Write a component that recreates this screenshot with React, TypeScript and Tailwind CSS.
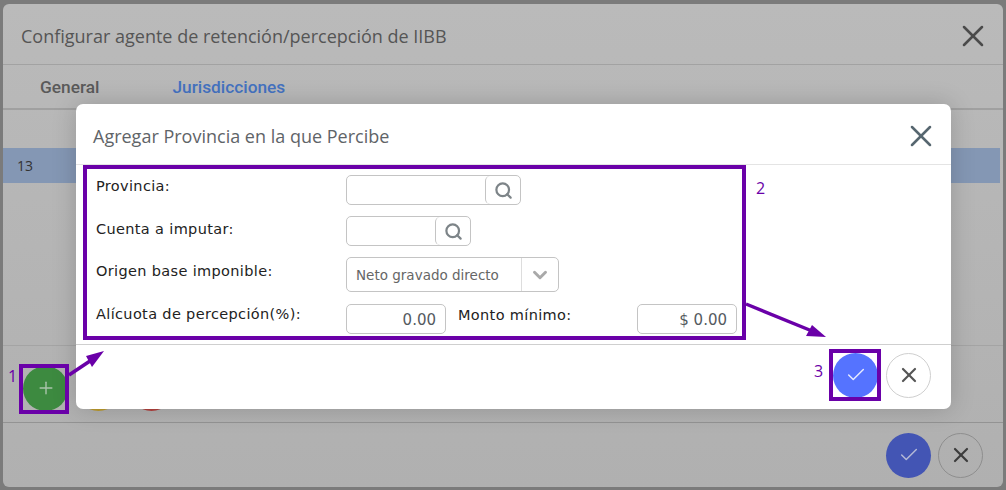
import React from 'react';
import { Check, ChevronDown, Plus, Search, X } from 'lucide-react';

const openSans = "font-['Open_Sans',sans-serif]";
const formFont = "font-['DejaVu_Sans',sans-serif]";

const RoundButton = ({ kind, dim }: { kind: 'ok' | 'cancel'; dim?: boolean }) =>
  kind === 'ok' ? (
    <button className={`flex h-[45px] w-[45px] items-center justify-center rounded-full ${dim ? 'bg-[#4355b4]' : 'bg-[#5573ff]'}`}>
      <Check size={22} strokeWidth={1.6} className={dim ? 'text-[#b4b9d6]' : 'text-[#e6eaff]'} />
    </button>
  ) : (
    <button className={`flex h-[45px] w-[45px] items-center justify-center rounded-full border ${dim ? 'border-[#8e8e8e]' : 'border-[#cfcfcf] bg-white'}`}>
      <X size={24} strokeWidth={2.2} className={dim ? 'text-[#3c3c3c]' : 'text-[#555555]'} />
    </button>
  );

const SearchField = ({ width }: { width: string }) => (
  <div className={`flex h-[30px] ${width} rounded-[5px] border border-[#c4c4c4]`}>
    <div className="flex-1" />
    <div className="flex w-[35px] items-center justify-center rounded-[5px] border-l border-[#c4c4c4]">
      <Search size={19} strokeWidth={2.8} className="text-[#7d8488]" />
    </div>
  </div>
);

const NumberField = ({ value }: { value: string }) => (
  <div className={`flex h-[30px] w-[100px] items-center justify-end rounded-[5px] border border-[#c4c4c4] pr-[9px] pt-[2px] text-[15px] text-[#555b5f] ${formFont}`}>
    {value}
  </div>
);

const Label = ({ children, className = '' }: { children: React.ReactNode; className?: string }) => (
  <span className={`text-[14.5px] tracking-[0.35px] text-[#222222] ${formFont} ${className}`}>{children}</span>
);

export default function App() {
  return (
    <div className="relative h-[490px] w-[1006px] overflow-hidden bg-[#7b7b7b] pb-[3px] pl-[3px] pr-[3px] pt-[4px]">
      {/* fondo: ventana principal */}
      <div className="flex h-[483px] flex-col rounded-[6px] bg-gradient-to-b from-[#bababa] to-[#b0b0b0]">
        <div className="flex h-[61px] items-center justify-between border-b border-[#a2a2a2] pl-[18px] pr-[12px] pt-[4px]">
          <h1 className={`text-[18px] font-medium text-[#555555] ${openSans}`}>Configurar agente de retención/percepción de IIBB</h1>
          <X size={36} strokeWidth={1.7} className="text-[#4a4a4a]" />
        </div>
        <div className="flex h-[45px] items-center gap-[73px] border-b-2 border-[#a0a0a0] pl-[37px] pt-[3px] font-['Roboto',sans-serif] text-[17.3px] font-medium">
          <span className="text-[#5a5a5a]">General</span>
          <span className="text-[#4472c0]">Jurisdicciones</span>
        </div>
        <div className="h-[38px] shrink-0" />
        <div className={`mr-[3px] flex h-[35px] shrink-0 items-center bg-[#8497b4] pl-[14px] text-[14px] text-[#333333] ${openSans}`}>13</div>
        <div className="flex-1" />
        <div className="flex h-[77px] shrink-0 items-center gap-[8px] border-t border-[#a4a4a4] pl-[20px] pt-[8px]">
          <div className="flex h-[45px] w-[45px] items-center justify-center rounded-full bg-[#3d8a40]">
            <Plus size={20} strokeWidth={1.7} className="text-[#a9c4aa]" />
          </div>
          <div className="h-[45px] w-[45px] rounded-full bg-[#bd9c2f]" />
          <div className="h-[45px] w-[45px] rounded-full bg-[#b2423e]" />
        </div>
        <div className="flex h-[65px] shrink-0 items-center justify-end gap-[7px] border-t border-[#939393] pr-[20px]">
          <RoundButton kind="ok" dim />
          <RoundButton kind="cancel" dim />
        </div>
      </div>

      {/* modal */}
      <div className="absolute left-[76px] top-[104px] flex h-[305px] w-[875px] flex-col rounded-[7px] bg-white shadow-[0_0_24px_rgba(0,0,0,0.18)]">
        <div className="flex h-[61px] shrink-0 items-center justify-between border-b border-[#e4e4e4] pl-[17px] pr-[12px] pt-[4px]">
          <h2 className={`text-[18px] font-medium text-[#5f6468] ${openSans}`}>Agregar Provincia en la que Percibe</h2>
          <X size={36} strokeWidth={1.7} className="text-[#56666f]" />
        </div>
        <div className="flex h-[179px] shrink-0 flex-col pl-[20px] pt-[10px]">
          <div className="flex h-[30px] items-start">
            <Label className="w-[250px] pt-[1px]">Provincia:</Label>
            <SearchField width="w-[175px]" />
          </div>
          <div className="mt-[11px] flex h-[30px] items-start">
            <Label className="w-[250px] pt-[3px]">Cuenta a imputar:</Label>
            <SearchField width="w-[125px]" />
          </div>
          <div className="mt-[11px] flex h-[35px] items-start">
            <Label className="w-[250px] pt-[4px]">Origen base imponible:</Label>
            <div className="flex h-[35px] w-[213px] rounded-[5px] border border-[#c4c4c4]">
              <span className={`flex flex-1 items-center pl-[9px] pt-[2px] text-[13.5px] text-[#666666] ${formFont}`}>Neto gravado directo</span>
              <div className="flex w-[37px] items-center justify-center border-l border-[#dddddd]">
                <ChevronDown size={22} strokeWidth={3.2} className="text-[#a9a9a9]" />
              </div>
            </div>
          </div>
          <div className="mt-[12px] flex h-[30px] items-start">
            <Label className="w-[250px]">Alícuota de percepción(%):</Label>
            <NumberField value="0.00" />
            <Label className="ml-[12px] w-[179px] pt-[1px]">Monto mínimo:</Label>
            <NumberField value="$ 0.00" />
          </div>
        </div>
        <div className="flex flex-1 items-center justify-end gap-[8px] border-t border-[#cfcfcf] pb-[4px] pr-[20px]">
          <RoundButton kind="ok" />
          <RoundButton kind="cancel" />
        </div>
      </div>

      {/* anotaciones sobre la captura */}
      <div className="absolute left-[83px] top-[165px] h-[175px] w-[663px] border-4 border-[#6a00a8]" />
      <div className="absolute left-[19px] top-[364px] h-[50px] w-[50px] border-[4px] border-[#6a00a8]" />
      <div className="absolute left-[829px] top-[349px] h-[52px] w-[52px] border-[4px] border-[#6a00a8]" />
      <span className={`absolute left-[8px] top-[364px] text-[16px] text-[#6a00a8] ${openSans}`}>1</span>
      <span className={`absolute left-[756px] top-[176px] text-[16px] text-[#6a00a8] ${openSans}`}>2</span>
      <span className={`absolute left-[814px] top-[359px] text-[16px] text-[#6a00a8] ${openSans}`}>3</span>
      <svg className="absolute left-0 top-0" width="1006" height="490" viewBox="0 0 1006 490" fill="none">
        <path d="M69 375 L90 361" stroke="#6a00a8" strokeWidth="3.5" />
        <path d="M104 351 L86 356 L92 367 Z" fill="#6a00a8" />
        <path d="M746 304 L812 331" stroke="#6a00a8" strokeWidth="3.5" />
        <path d="M826 337 L806 336 L812 325 Z" fill="#6a00a8" />
      </svg>
    </div>
  );
}
